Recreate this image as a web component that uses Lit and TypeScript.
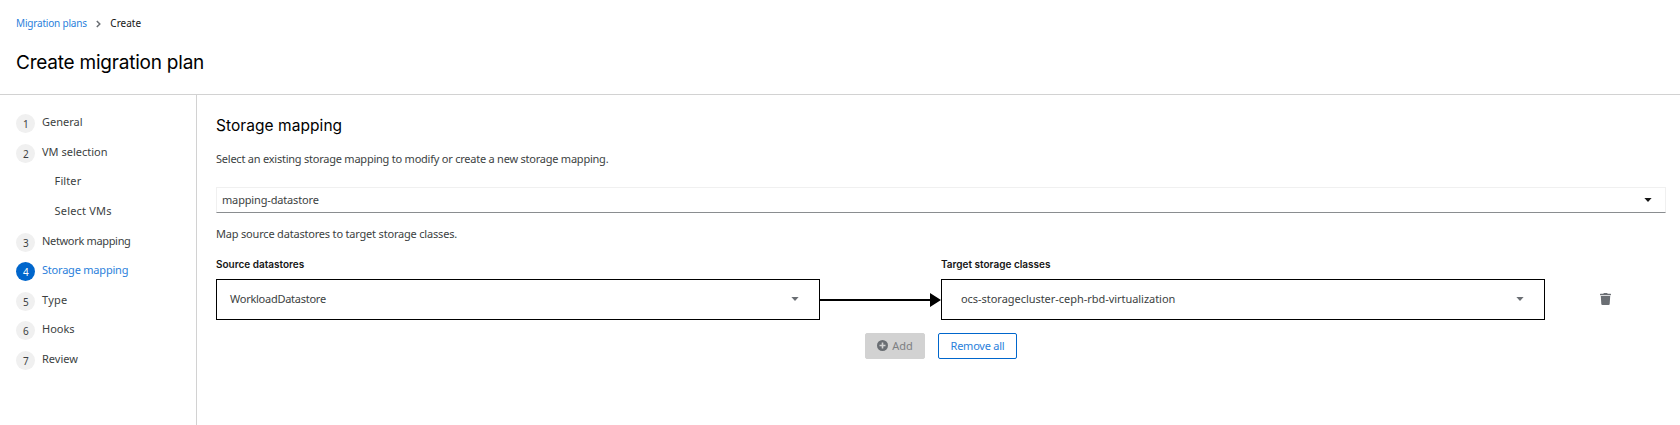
import { LitElement, html, css, svg } from "lit";
import { customElement, property } from "lit/decorators.js";
import { classMap } from "lit/directives/class-map.js";

interface Step {
  label: string;
  number?: number;
  current?: boolean;
  tracking: number;
}

const STEPS: Step[] = [
  { number: 1, label: "General", tracking: 0 },
  { number: 2, label: "VM selection", tracking: 0 },
  { label: "Filter", tracking: 0.1 },
  { label: "Select VMs", tracking: 0.18 },
  { number: 3, label: "Network mapping", tracking: -0.33 },
  { number: 4, label: "Storage mapping", current: true, tracking: -0.21 },
  { number: 5, label: "Type", tracking: 0.25 },
  { number: 6, label: "Hooks", tracking: 0 },
  { number: 7, label: "Review", tracking: 0 },
];

const caret = html`<svg class="caret" width="8" height="4" viewBox="0 0 8 4" aria-hidden="true">${svg`<path d="M.4 0h7.2L4 4z" fill="currentColor"/>`}</svg>`;

@customElement("wizard-nav")
export class WizardNav extends LitElement {
  @property({ attribute: false }) steps: Step[] = [];

  static styles = css`
    :host { display: block; box-sizing: border-box; width: 197px; flex: none; border-right: 1px solid #d2d2d2; padding: 13.3px 0 0 16.3px; }
    ol { list-style: none; margin: 0; padding: 0; }
    .step { display: flex; align-items: flex-start; height: 29.6px; color: #3c3f42; font-size: 11px; line-height: 17px; }
    .sub { padding-left: 38.3px; }
    .number { box-sizing: border-box; width: 19px; height: 19px; margin: 6px 6.7px 0 0; border-radius: 50%; background: #f0f0f0; text-align: center; font-size: 10px; line-height: 20px; }
    .label { padding-top: 5px; }
    .current .number { background: #06c; color: #fff; }
    .current .label { color: #2b7fdb; }
  `;

  render() {
    return html`<ol>
      ${this.steps.map((s) => html`<li class=${classMap({ step: true, sub: !s.number, current: !!s.current })}>
        ${s.number ? html`<span class="number">${s.number}</span>` : null}
        <span class="label" style="letter-spacing:${s.tracking}px">${s.label}</span>
      </li>`)}
    </ol>`;
  }
}

@customElement("app-root")
export class AppRoot extends LitElement {
  static styles = css`
    :host { display: flex; flex-direction: column; height: 425px; box-sizing: border-box; overflow: hidden; background: #fff; color: #3c3f42; font-family: "Noto Sans", "Open Sans", sans-serif; font-size: 11px; line-height: 17px; }
    header { box-sizing: border-box; height: 95px; flex: none; border-bottom: 1px solid #d2d2d2; padding: 15px 16px 0; }
    .crumbs { display: flex; align-items: center; height: 17px; font-size: 10px; color: #151515; }
    .crumbs a { color: #2b7fdb; letter-spacing: -0.19px; }
    .crumbs svg { margin: 0 9.5px 0 9px; }
    h1, h2, p { margin: 0; }
    h1 { margin-top: 18px; font: 400 19px/26px Inter, sans-serif; letter-spacing: -0.22px; color: #000; }
    .body { display: flex; flex: 1; min-height: 0; }
    main { flex: 1; padding: 20px 14px 0 19px; }
    h2 { font: 400 15.5px/22px Inter, sans-serif; letter-spacing: 0.06px; color: #000; }
    .intro { margin-top: 13px; letter-spacing: -0.23px; }
    .hint { margin-top: 12px; letter-spacing: -0.19px; }
    .select { display: flex; align-items: center; justify-content: space-between; box-sizing: border-box; height: 26px; margin-top: 20px; padding: 0 13px 1px 5px; border: 1px solid #f0f0f0; border-bottom-color: #8a8d90; color: #3c3f42; letter-spacing: -0.16px; }
    .select .caret { margin-top: 1px; color: #151515; }
    .mapping { display: grid; grid-template-columns: 604px 121px 604px 1fr; margin-top: 14px; }
    .head { font: 600 10px/17px Inter, sans-serif; height: 23px; color: #151515; }
    .target-head { grid-column: 3 / 5; }
    .box { display: flex; align-items: center; justify-content: space-between; box-sizing: border-box; height: 41px; border: 1px solid #000; padding: 0 20px 2px 13px; color: #3c3f42; }
    .source { letter-spacing: -0.26px; }
    .target { padding-left: 19px; letter-spacing: -0.04px; }
    .box .caret { color: #6a6e73; margin-top: 1px; }
    .arrow { display: flex; align-items: flex-start; padding-top: 14px; }
    .trash { display: flex; align-items: center; height: 39px; padding-left: 55px; }
    .actions { display: flex; justify-content: center; gap: 13px; margin-top: 13px; }
    button { display: flex; align-items: center; justify-content: center; box-sizing: border-box; height: 26px; padding: 0 0 1px; border: 1px solid #06c; border-radius: 2px; background: #fff; color: #2b7fdb; font: inherit; letter-spacing: -0.23px; width: 79px; }
    .add { gap: 4px; width: 60px; border-color: #d2d2d2; background: #d2d2d2; color: #7d8083; letter-spacing: -0.1px; }
  `;

  render() {
    return html`
      <header>
        <nav class="crumbs">
          <a>Migration plans</a>
          <svg width="5" height="8" viewBox="0 0 5 8" aria-hidden="true"><path d="M.8 1l3 3-3 3" fill="none" stroke="#6a6e73" stroke-width="1.5"/></svg>
          <span>Create</span>
        </nav>
        <h1>Create migration plan</h1>
      </header>
      <div class="body">
        <wizard-nav .steps=${STEPS}></wizard-nav>
        <main>
          <h2>Storage mapping</h2>
          <p class="intro">Select an existing storage mapping to modify or create a new storage mapping.</p>
          <div class="select"><span>mapping-datastore</span>${caret}</div>
          <p class="hint">Map source datastores to target storage classes.</p>
          <div class="mapping">
            <div class="head">Source datastores</div>
            <div></div>
            <div class="head target-head">Target storage classes</div>
            <div class="box source"><span>WorkloadDatastore</span>${caret}</div>
            <div class="arrow">
              <svg width="121" height="14" viewBox="0 0 121 14" aria-hidden="true"><path d="M0 6h110V0l11 7-11 7V8H0z" fill="#000"/></svg>
            </div>
            <div class="box target"><span>ocs-storagecluster-ceph-rbd-virtualization</span>${caret}</div>
            <div class="trash">
              <svg width="11" height="12" viewBox="0 0 448 512" preserveAspectRatio="none" fill="#6a6e73" aria-hidden="true"><path d="M432 32H312l-9.400-18.700A24 24 0 0 0 281.100 0H166.800a23.720 23.720 0 0 0-21.400 13.300L136 32H16A16 16 0 0 0 0 48v32a16 16 0 0 0 16 16h416a16 16 0 0 0 16-16V48a16 16 0 0 0-16-16zM53.200 467a48 48 0 0 0 47.900 45h245.800a48 48 0 0 0 47.900-45L416 128H32z"/></svg>
            </div>
          </div>
          <div class="actions">
            <button class="add" disabled>
              <svg width="11" height="11" viewBox="0 0 11 11" aria-hidden="true"><circle cx="5.5" cy="5.5" r="5.5" fill="#6a6e73"/><path d="M5.5 2.5v6M2.5 5.5h6" stroke="#d2d2d2" stroke-width="1.6"/></svg>
              <span>Add</span>
            </button>
            <button>Remove all</button>
          </div>
        </main>
      </div>
    `;
  }
}
